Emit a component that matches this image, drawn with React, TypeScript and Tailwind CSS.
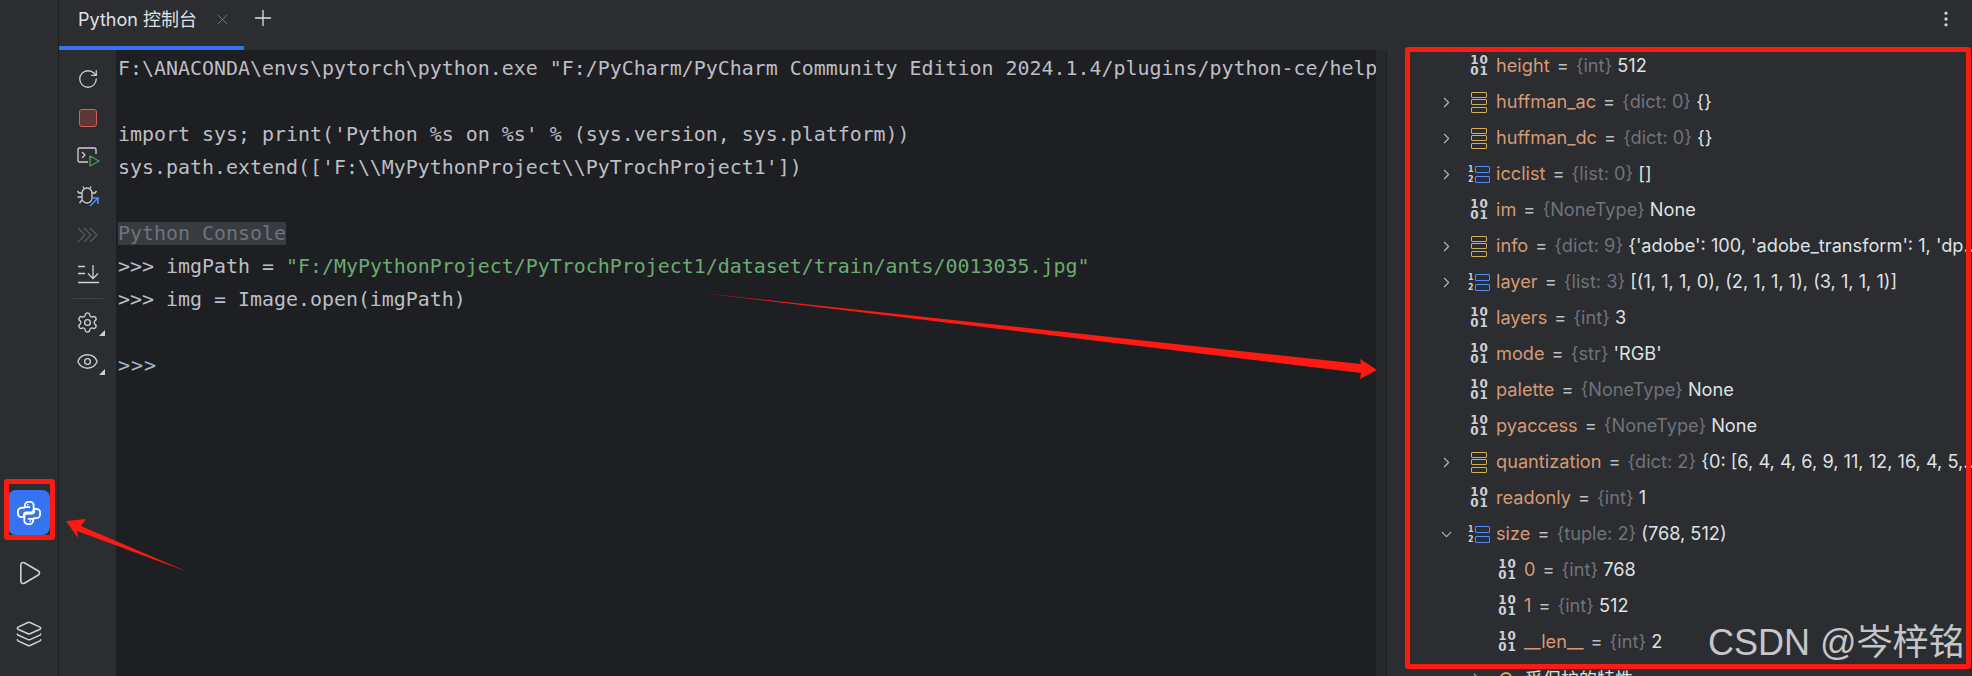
import { ChevronDown, ChevronRight, EllipsisVertical, Eye, Layers, Play, Plus, RotateCw, Settings, X } from "lucide-react";

type Kind = "prim" | "dict" | "list";

type Row = {
  name: string;
  type: string;
  value: string;
  kind: Kind;
  open?: boolean;
  child?: boolean;
};

const ROWS: Row[] = [
  { name: "height", type: "{int}", value: "512", kind: "prim" },
  { name: "huffman_ac", type: "{dict: 0}", value: "{}", kind: "dict" },
  { name: "huffman_dc", type: "{dict: 0}", value: "{}", kind: "dict" },
  { name: "icclist", type: "{list: 0}", value: "[]", kind: "list" },
  { name: "im", type: "{NoneType}", value: "None", kind: "prim" },
  { name: "info", type: "{dict: 9}", value: "{'adobe': 100, 'adobe_transform': 1, 'dp...", kind: "dict" },
  { name: "layer", type: "{list: 3}", value: "[(1, 1, 1, 0), (2, 1, 1, 1), (3, 1, 1, 1)]", kind: "list" },
  { name: "layers", type: "{int}", value: "3", kind: "prim" },
  { name: "mode", type: "{str}", value: "'RGB'", kind: "prim" },
  { name: "palette", type: "{NoneType}", value: "None", kind: "prim" },
  { name: "pyaccess", type: "{NoneType}", value: "None", kind: "prim" },
  { name: "quantization", type: "{dict: 2}", value: "{0: [6, 4, 4, 6, 9, 11, 12, 16, 4, 5,...", kind: "dict" },
  { name: "readonly", type: "{int}", value: "1", kind: "prim" },
  { name: "size", type: "{tuple: 2}", value: "(768, 512)", kind: "list", open: true },
  { name: "0", type: "{int}", value: "768", kind: "prim", child: true },
  { name: "1", type: "{int}", value: "512", kind: "prim", child: true },
  { name: "__len__", type: "{int}", value: "2", kind: "prim", child: true },
];

function BinaryIcon() {
  return (
    <div className="w-[17px] flex flex-col items-center text-[12px] leading-[11px] font-bold text-[#ced0d6] font-['DejaVu_Sans',sans-serif] tracking-[1px]">
      <span>10</span>
      <span>01</span>
    </div>
  );
}

function DictIcon() {
  return (
    <div className="w-[16px] flex flex-col gap-[1.5px]">
      <div className="h-[6px] rounded-[1px] border-[1.5px] border-[#d6ae58]" />
      <div className="h-[6px] rounded-[1px] border-[1.5px] border-[#d6ae58]" />
      <div className="h-[6px] rounded-[1px] border-[1.5px] border-[#d6ae58]" />
    </div>
  );
}

function ListIcon() {
  return (
    <div className="w-[22px] flex flex-col gap-[3px] -ml-[3px]">
      {["1", "2"].map((n) => (
        <div key={n} className="flex items-center gap-[1px]">
          <span className="w-[6px] text-[8px] leading-[7px] font-bold text-[#ced0d6] font-['DejaVu_Sans',sans-serif]">{n}</span>
          <div className="h-[7px] w-[15px] rounded-[1px] border-[1.5px] border-[#548af7]" />
        </div>
      ))}
    </div>
  );
}

function VarRow({ row }: { row: Row }) {
  return (
    <div className={`h-[36px] flex items-center whitespace-nowrap ${row.child ? "pl-[112px]" : "pl-[51px]"}`}>
      {!row.child && (
        <div className="w-[33px] shrink-0 flex justify-start text-[#b4b8bf]">
          {row.open ? <ChevronDown size={17} strokeWidth={1.5} /> : row.kind !== "prim" ? <ChevronRight size={17} strokeWidth={1.5} /> : null}
        </div>
      )}
      <div className="w-[25px] shrink-0 flex justify-start">
        {row.kind === "prim" && <BinaryIcon />}
        {row.kind === "dict" && <DictIcon />}
        {row.kind === "list" && <ListIcon />}
      </div>
      <span className="shrink-0 text-[#d59a75]">{row.name}</span>
      <span className="shrink-0 text-[#bcbec4] mx-[7px]">=</span>
      <span className="shrink-0 text-[#6f737a]">{row.type}</span>
      <span className="shrink-0 text-[#dfe1e5] ml-[5px]">{row.value}</span>
    </div>
  );
}

function ConsoleIcon() {
  return (
    <svg width="24" height="22" viewBox="0 0 24 22" fill="none">
      <path d="M12 16H3.500A1.500 1.500 0 0 1 2 14.500V3.500A1.500 1.500 0 0 1 3.500 2h15A1.500 1.500 0 0 1 20 3.500V8" stroke="#ced0d6" strokeWidth="1.3" />
      <path d="M6 6l3 3-3 3" stroke="#ced0d6" strokeWidth="1.3" />
      <path d="M14 10v10l9-5z" stroke="#57965c" strokeWidth="1.4" strokeLinejoin="round" />
    </svg>
  );
}

function BugIcon() {
  return (
    <svg width="24" height="22" viewBox="0 0 24 22" fill="none">
      <path d="M6 8a5 5 0 0 1 10 0v4a5 5 0 0 1-5 6 5 5 0 0 1-5-6z" stroke="#ced0d6" strokeWidth="1.3" />
      <path d="M8 3.500L7 1.500M14 3.500l1-2M6 8H3L1.500 6M16 8h3l1.500-2M6 12H1.500M6 15l-2.500 3" stroke="#ced0d6" strokeWidth="1.3" />
      <path d="M14 21l8-8M16 13h6v6" stroke="#548af7" strokeWidth="1.6" />
    </svg>
  );
}

function RunAllIcon() {
  return (
    <svg width="24" height="16" viewBox="0 0 24 16" fill="none" stroke="#55585e" strokeWidth="1.4">
      <path d="M2 1l7 7-7 7M8 1l7 7-7 7M14 1l7 7-7 7" />
    </svg>
  );
}

function ScrollEndIcon() {
  return (
    <svg width="24" height="20" viewBox="0 0 24 20" fill="none" stroke="#ced0d6" strokeWidth="1.3">
      <path d="M2 2.500h7M2 9.500h7M2 18.500h21M17 1v13M12 9.500l5 5 5-5" />
    </svg>
  );
}

const SNAKE =
  "M13 7H8.500V5.500a3 3 0 0 1 3-3h1.500a3 3 0 0 1 3 3V9a2.500 2.500 0 0 1-2.500 2.500H10A2.500 2.500 0 0 0 7.500 14v1.500h-2a3 3 0 0 1-3-3V11a3.500 3.500 0 0 1 3.500-3.500h2.500";

function PythonIcon() {
  return (
    <svg width="28" height="28" viewBox="0 0 24 24" fill="none" stroke="#fff" strokeWidth="1.6" strokeLinejoin="round">
      <path d={SNAKE} />
      <g transform="rotate(180 12 12)">
        <path d={SNAKE} />
      </g>
      <circle cx="11" cy="5" r="0.7" fill="#fff" stroke="none" />
      <circle cx="13" cy="19" r="0.7" fill="#fff" stroke="none" />
    </svg>
  );
}

function ToolButton({ children, menu }: { children: React.ReactNode; menu?: boolean }) {
  return (
    <div className="relative h-[39px] flex items-center justify-center">
      {children}
      {menu && <div className="absolute right-[11px] bottom-[6px] w-0 h-0 border-l-[6px] border-l-transparent border-b-[6px] border-b-[#ced0d6]" />}
    </div>
  );
}

export default function App() {
  return (
    <div className="relative w-[1972px] h-[676px] flex overflow-hidden bg-[#2b2d30] text-[#bcbec4] font-['Inter',sans-serif]">
      {/* left tool stripe */}
      <div className="w-[59px] shrink-0 flex flex-col items-center justify-end pb-[28px] border-r border-[#1e1f22] text-[#ced0d6]">
        <div className="w-[42px] h-[45px] -ml-[1px] rounded-lg bg-[#3574f0] flex items-center justify-center">
          <PythonIcon />
        </div>
        <Play size={28} strokeWidth={1.4} className="mt-[24px]" />
        <Layers size={28} strokeWidth={1.3} className="mt-[33px]" />
      </div>

      <div className="flex-1 min-w-0 flex flex-col">
        {/* tab bar */}
        <div className="h-[50px] shrink-0 flex items-start">
          <div className="w-[185px] h-[50px] pl-[19px] pb-[8px] flex items-center border-b-4 border-[#3574f0] rounded-b-[1px] text-[18px] text-[#dfe1e5] font-['Inter','Noto_Sans_CJK_SC',sans-serif]">
            <span>Python 控制台</span>
            <X size={17} strokeWidth={1.4} className="ml-[17px] text-[#6f737a]" />
          </div>
          <Plus size={26} strokeWidth={1.2} className="ml-[6px] mt-[5px] text-[#dfe1e5]" />
          <EllipsisVertical size={20} strokeWidth={2} className="ml-auto mr-[16px] mt-[9px] text-[#ced0d6]" />
        </div>

        <div className="flex-1 min-h-0 flex">
          {/* console toolbar */}
          <div className="w-[57px] shrink-0 pt-[9px] flex flex-col text-[#ced0d6]">
            <ToolButton><RotateCw size={22} strokeWidth={1.4} /></ToolButton>
            <ToolButton><div className="w-[18px] h-[18px] rounded-[3px] border-[1.5px] border-[#db5c5c] bg-[#5e3838]" /></ToolButton>
            <ToolButton><ConsoleIcon /></ToolButton>
            <ToolButton><BugIcon /></ToolButton>
            <ToolButton><RunAllIcon /></ToolButton>
            <ToolButton><ScrollEndIcon /></ToolButton>
            <div className="h-[10px] flex items-center justify-center">
              <div className="w-[30px] h-[1px] bg-[#43454a]" />
            </div>
            <ToolButton menu><Settings size={23} strokeWidth={1.4} /></ToolButton>
            <ToolButton menu><Eye size={23} strokeWidth={1.4} /></ToolButton>
          </div>

          {/* console output */}
          <div className="w-[1260px] shrink-0 pl-[2px] pt-[2px] bg-[#1e1f22] overflow-hidden whitespace-pre text-[19.93px] leading-[33px] text-[#bcbec4] font-['DejaVu_Sans_Mono',monospace]">
            <div>F:\ANACONDA\envs\pytorch\python.exe "F:/PyCharm/PyCharm Community Edition 2024.1.4/plugins/python-ce/helpers/pydev/pydevconsole.py"</div>
            <div>&nbsp;</div>
            <div>import sys; print('Python %s on %s' % (sys.version, sys.platform))</div>
            <div>sys.path.extend(['F:\\MyPythonProject\\PyTrochProject1'])</div>
            <div>&nbsp;</div>
            <div><span className="bg-[#393b40] text-[#6f737a]">Python Console</span></div>
            <div>&gt;&gt;&gt; imgPath = <span className="text-[#6aab73]">"F:/MyPythonProject/PyTrochProject1/dataset/train/ants/0013035.jpg"</span></div>
            <div>&gt;&gt;&gt; img = Image.open(imgPath)</div>
            <div>&nbsp;</div>
            <div className="text-[#a9b7c6] tracking-[1px]">&gt;&gt;&gt;</div>
          </div>

          <div className="w-[11px] shrink-0 bg-[#26282b] border-r border-[#1e1f22]" />

          {/* variables panel */}
          <div className="flex-1 min-w-0 -mt-[2px] overflow-hidden text-[18.2px]">
            {ROWS.map((r) => (
              <VarRow key={r.name} row={r} />
            ))}
            <div className="h-[36px] pl-[81px] flex items-center whitespace-nowrap text-[18px] font-['Noto_Sans_CJK_SC',sans-serif]">
              <ChevronRight size={17} strokeWidth={1.5} className="text-[#b4b8bf]" />
              <div className="w-[12px] h-[12px] ml-[15px] mr-[13px] rounded-full border-2 border-[#d6ae58]" />
              <span className="text-[#dfe1e5]">受保护的特性</span>
            </div>
          </div>
        </div>
      </div>

      {/* annotations drawn over the screenshot */}
      <div className="absolute left-[4px] top-[479px] w-[51px] h-[61px] rounded-[3px] border-[5px] border-[#fb1b12]" />
      <div className="absolute left-[1405px] top-[47px] w-[566px] h-[622px] rounded-[3px] border-[5px] border-[#fb1b12]" />
      <svg className="absolute inset-0 pointer-events-none" width="1972" height="676" viewBox="0 0 1972 676">
        <polygon fill="#fb1b12" points="66,521 86,519 81,526 188,572 77,531 78,538" />
        <polygon fill="#fb1b12" points="702,293 1361,364 1360,359 1377,370 1360,379 1361,373" />
      </svg>
      <div className="absolute left-[1708px] top-[622px] text-[36px] leading-[42px] whitespace-nowrap text-[#c4c6ca] font-['Liberation_Sans','Noto_Sans_CJK_SC',sans-serif]">
        CSDN @岑梓铭
      </div>
    </div>
  );
}
